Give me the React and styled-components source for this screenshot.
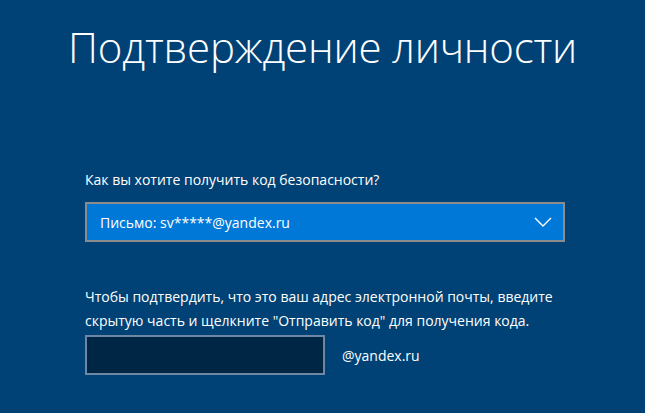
import React from "react";
import styled, { createGlobalStyle } from "styled-components";

const GlobalStyle = createGlobalStyle`
  html, body {
    margin: 0;
    padding: 0;
    background: #004275;
  }
  body {
    font-family: "Open Sans", "Noto Sans", "Liberation Sans", sans-serif;
    color: #ffffff;
  }
`;

const Page = styled.div`
  width: 645px;
  height: 413px;
  overflow: hidden;
  background: #004275;
  display: flex;
  flex-direction: column;
`;

const Title = styled.h1`
  margin: 0;
  padding-top: 17px;
  text-align: center;
  font-weight: 300;
  font-size: 42px;
  line-height: 60px;
  letter-spacing: -0.2px;
  color: #ffffff;
`;

const Form = styled.div`
  display: flex;
  flex-direction: column;
  padding: 0 0 0 85px;
  margin-top: 93px;
`;

const Label = styled.div`
  font-size: 14px;
  line-height: 20px;
  margin-bottom: 12px;
`;

const Select = styled.div`
  box-sizing: border-box;
  width: 480px;
  height: 40px;
  border: 2px solid #8c8c8c;
  background: #0078d7;
  display: flex;
  align-items: center;
  justify-content: space-between;
  padding: 0 11px 0 13px;
  font-size: 14px;
`;

const Chevron = () => (
  <svg width="18" height="10" viewBox="0 0 18 10" fill="none">
    <path d="M1 1l8 8 8-8" stroke="#ffffff" strokeWidth="1.4" />
  </svg>
);

const Hint = styled.p`
  margin: 43px 0 2px;
  width: 480px;
  font-size: 14px;
  line-height: 24px;
`;

const Row = styled.div`
  display: flex;
  align-items: center;
  gap: 17px;
`;

const Input = styled.input`
  box-sizing: border-box;
  width: 240px;
  height: 40px;
  border: 2px solid #6f87a3;
  background: #002645;
  color: #ffffff;
  outline: none;
  padding: 0 10px;
  font: inherit;
`;

const Domain = styled.span`
  font-size: 14px;
`;

export default function App() {
  return (
    <Page>
      <GlobalStyle />
      <Title>Подтверждение личности</Title>
      <Form>
        <Label>Как вы хотите получить код безопасности?</Label>
        <Select>
          <span>Письмо: sv*****@yandex.ru</span>
          <Chevron />
        </Select>
        <Hint>
          Чтобы подтвердить, что это ваш адрес электронной почты, введите
          скрытую часть и щелкните "Отправить код" для получения кода.
        </Hint>
        <Row>
          <Input type="text" />
          <Domain>@yandex.ru</Domain>
        </Row>
      </Form>
    </Page>
  );
}
